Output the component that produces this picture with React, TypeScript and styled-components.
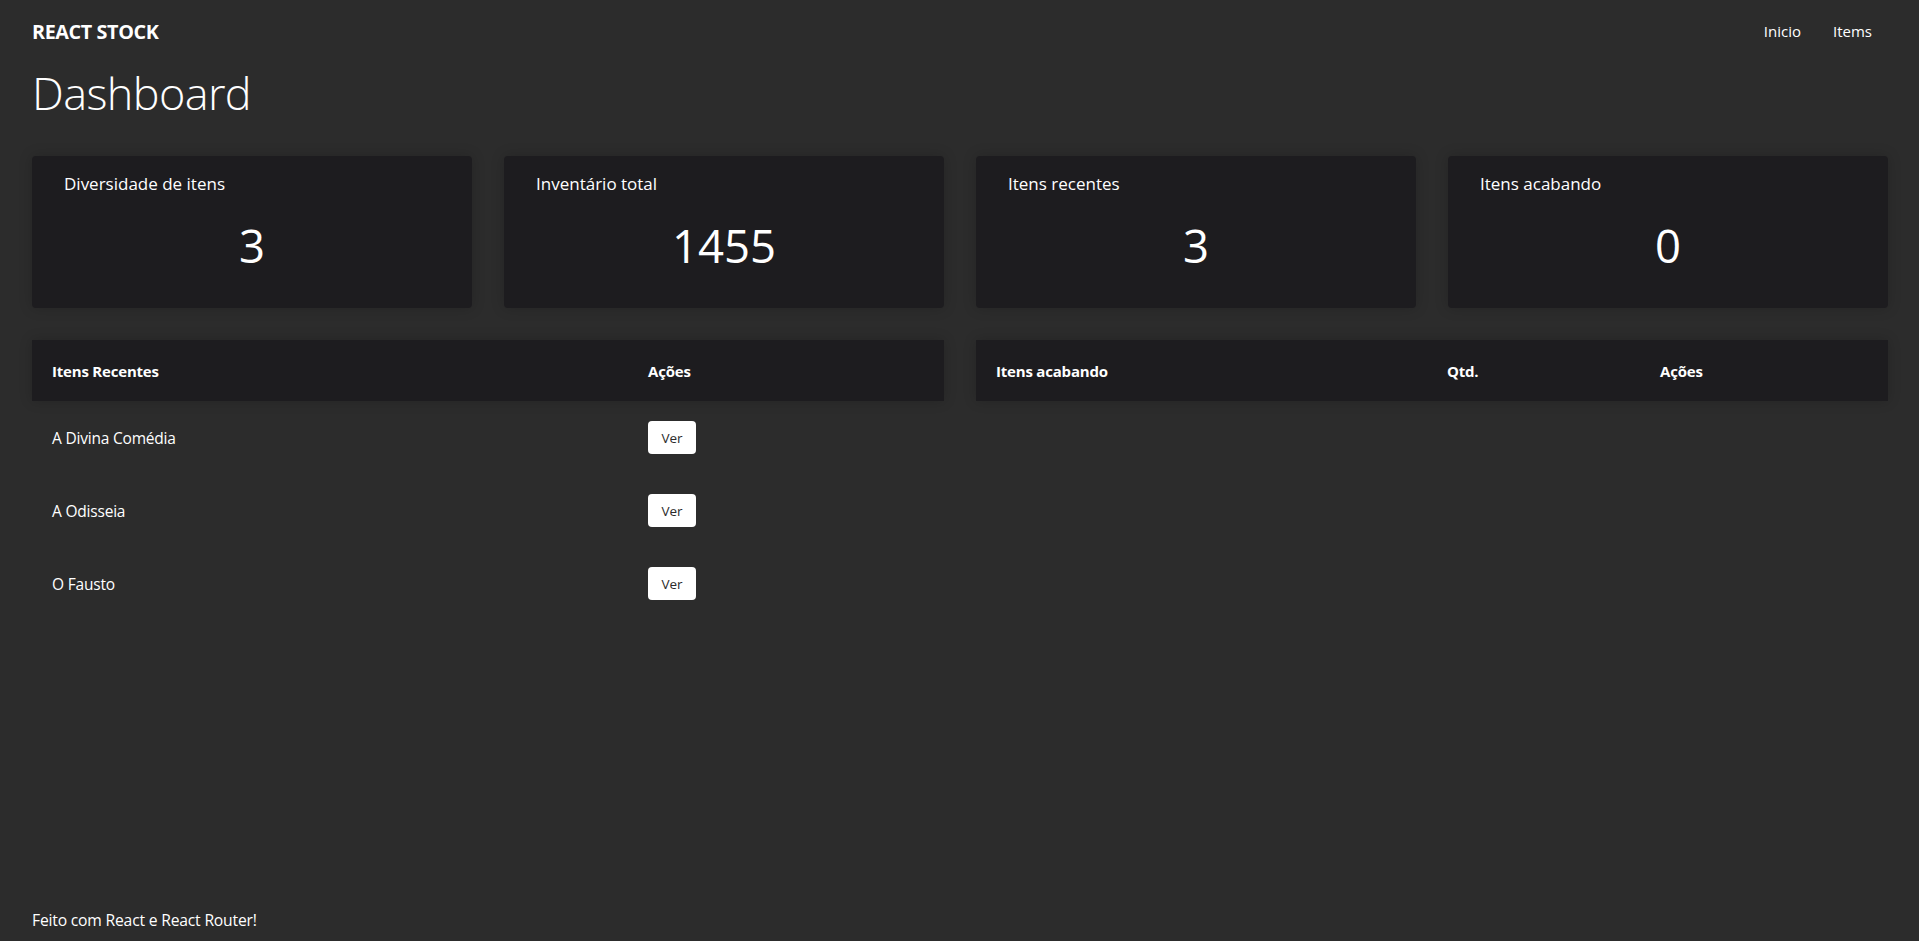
import React from "react";
import styled, { createGlobalStyle } from "styled-components";

const GlobalStyle = createGlobalStyle`
  * { box-sizing: border-box; }
  html, body { margin: 0; padding: 0; }
  body {
    background: #2c2c2c;
    color: #ffffff;
    font-family: "Open Sans", "Noto Sans", sans-serif;
  }
`;

const Page = styled.div`
  min-height: 100vh;
  display: flex;
  flex-direction: column;
  padding: 0 31px 0 32px;
`;

const TopBar = styled.header`
  display: flex;
  justify-content: space-between;
  align-items: center;
  height: 62px;
`;

const Brand = styled.span`
  font-size: 19.8px;
  font-weight: 700;
  letter-spacing: -0.4px;
`;

const Nav = styled.nav`
  display: flex;
`;

const NavLink = styled.a`
  color: #ffffff;
  text-decoration: none;
  font-size: 15px;
  padding: 0 16px;
`;

const Main = styled.main`
  flex: 1;
`;

const Title = styled.h1`
  margin: 0 0 32px;
  font-size: 45px;
  font-weight: 300;
  line-height: 62px;
  letter-spacing: -0.6px;
`;

const CardGrid = styled.div`
  display: grid;
  grid-template-columns: repeat(4, 1fr);
  gap: 32px;
`;

const Card = styled.div`
  background: #1d1c1f;
  border-radius: 4px;
  height: 152px;
  padding: 16px 32px 0;
  box-shadow: 0 0 14px rgba(0, 0, 0, 0.18);
  display: flex;
  flex-direction: column;
`;

const CardTitle = styled.h3`
  margin: 0;
  font-size: 17px;
  font-weight: 400;
  line-height: 24px;
`;

const CardValue = styled.div`
  text-align: center;
  font-size: 45.5px;
  font-weight: 400;
  line-height: 60px;
  margin-top: 19px;
`;

const TablesRow = styled.div`
  display: grid;
  grid-template-columns: 1fr 1fr;
  gap: 32px;
  margin-top: 32px;
`;

const Table = styled.table`
  width: 100%;
  border-collapse: collapse;
  table-layout: fixed;
`;

const HeadRow = styled.tr`
  background: #1d1c1f;
  box-shadow: 0 0 12px rgba(0, 0, 0, 0.18);
`;

const Th = styled.th<{ $w?: string }>`
  text-align: left;
  padding: 20px;
  height: 61px;
  font-size: 15px;
  font-weight: 700;
  letter-spacing: -0.2px;
  width: ${(p) => p.$w ?? "auto"};
`;

const Td = styled.td`
  padding: 20px;
  height: 73px;
  font-size: 15.5px;
  letter-spacing: -0.2px;
`;

const ViewButton = styled.button`
  background: #ffffff;
  color: #2b2b2b;
  border: none;
  border-radius: 4px;
  width: 48px;
  height: 33px;
  font-family: inherit;
  font-size: 13.5px;
  cursor: pointer;
`;

const Footer = styled.footer`
  font-size: 15.7px;
  line-height: 20px;
  padding: 0 0 11px;
  letter-spacing: -0.2px;
`;

const stats = [
  { label: "Diversidade de itens", value: 3 },
  { label: "Inventário total", value: 1455 },
  { label: "Itens recentes", value: 3 },
  { label: "Itens acabando", value: 0 },
];

const recent = ["A Divina Comédia", "A Odisseia", "O Fausto"];

export default function App() {
  return (
    <>
      <GlobalStyle />
      <Page>
        <TopBar>
          <Brand>REACT STOCK</Brand>
          <Nav>
            <NavLink href="#">Inicio</NavLink>
            <NavLink href="#">Items</NavLink>
          </Nav>
        </TopBar>
        <Main>
          <Title>Dashboard</Title>
          <CardGrid>
            {stats.map((s) => (
              <Card key={s.label}>
                <CardTitle>{s.label}</CardTitle>
                <CardValue>{s.value}</CardValue>
              </Card>
            ))}
          </CardGrid>
          <TablesRow>
            <Table>
              <thead>
                <HeadRow>
                  <Th $w="596px">Itens Recentes</Th>
                  <Th>Ações</Th>
                </HeadRow>
              </thead>
              <tbody>
                {recent.map((r) => (
                  <tr key={r}>
                    <Td>{r}</Td>
                    <Td>
                      <ViewButton>Ver</ViewButton>
                    </Td>
                  </tr>
                ))}
              </tbody>
            </Table>
            <Table>
              <thead>
                <HeadRow>
                  <Th $w="451px">Itens acabando</Th>
                  <Th $w="213px">Qtd.</Th>
                  <Th>Ações</Th>
                </HeadRow>
              </thead>
              <tbody></tbody>
            </Table>
          </TablesRow>
        </Main>
        <Footer>Feito com React e React Router!</Footer>
      </Page>
    </>
  );
}
